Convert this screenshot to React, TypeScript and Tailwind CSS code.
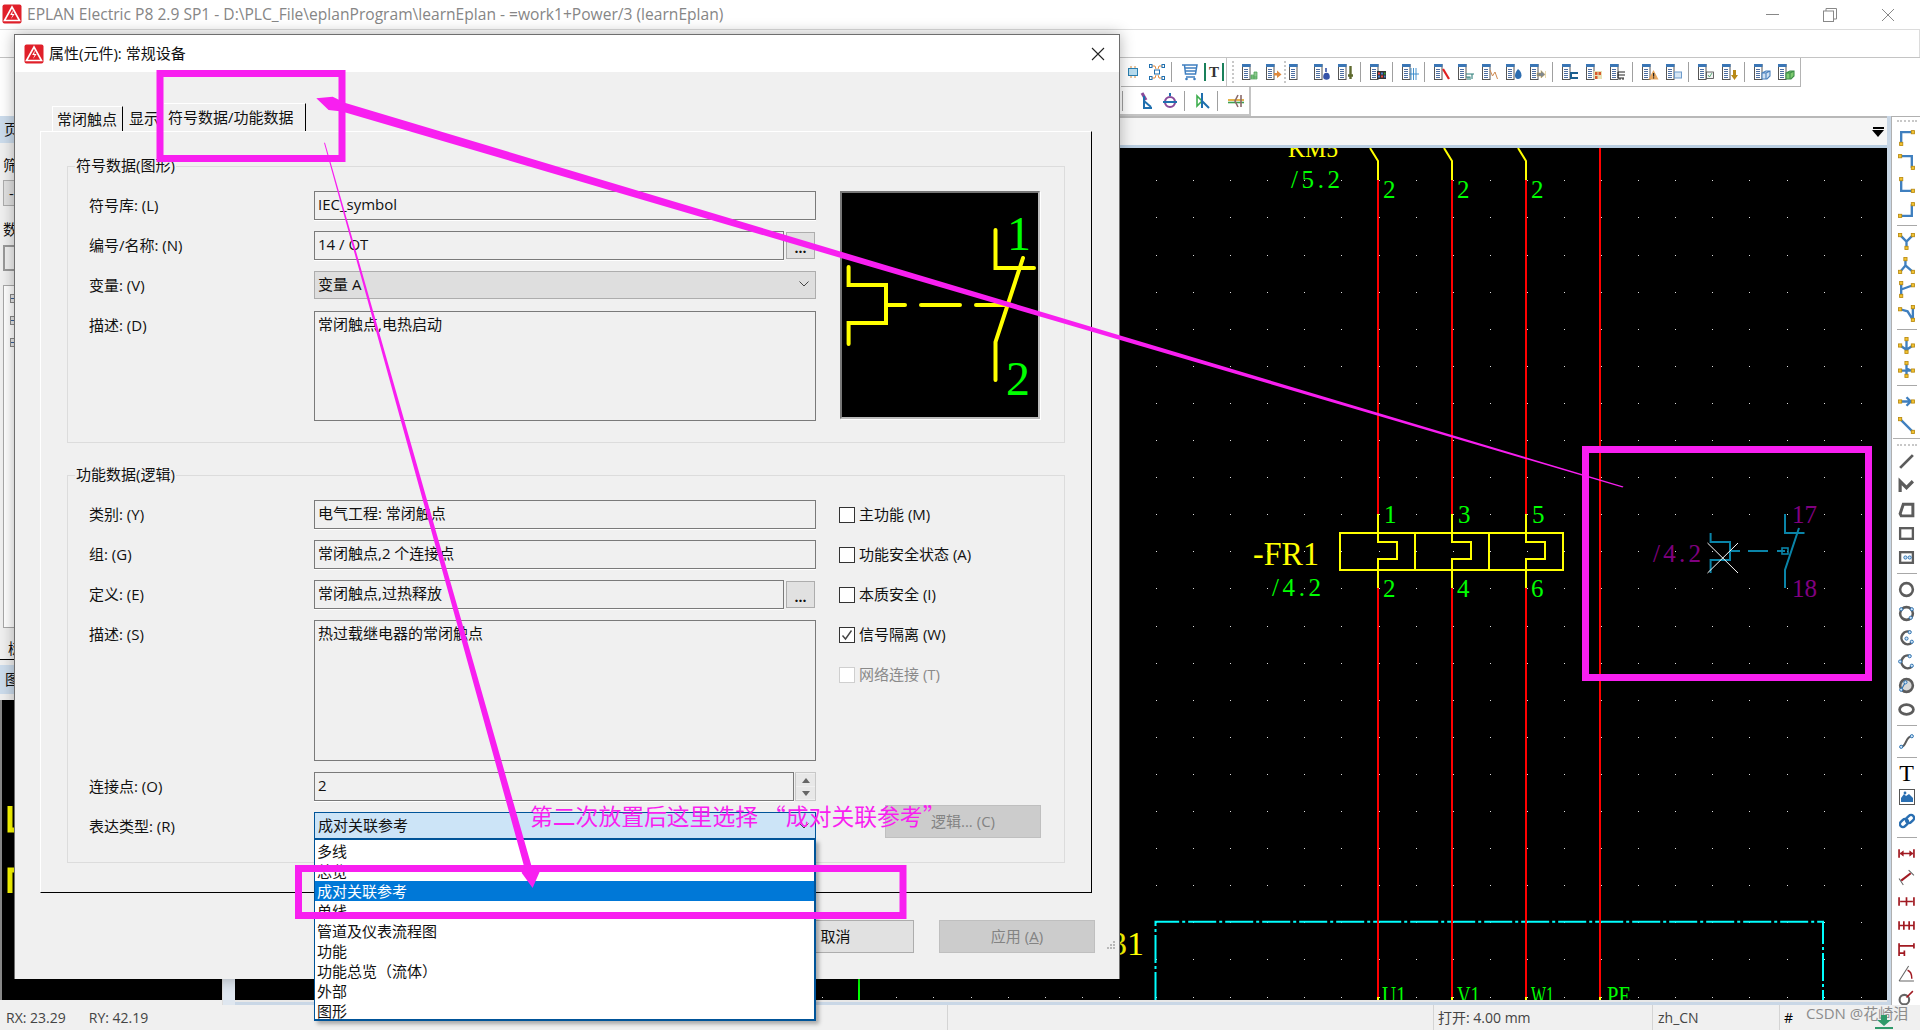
import type { ReactNode } from "react";

const serif = "Liberation Serif, serif";
const MAGENTA = "#f81ff0";

const Logo = () => (
  <svg width="20" height="20" viewBox="0 0 20 20">
    <rect x="0.5" y="0.5" width="19" height="19" rx="2" fill="#e0202a" />
    <path d="M10 3 L17.5 16.5 H2.5 Z" fill="none" stroke="#fff" strokeWidth="1.6" />
    <path d="M11 6 L8.2 11 H10.6 L9 15 L12.6 10 H10.2 Z" fill="#fff" />
  </svg>
);

/* toolbar document icons: page plus a small coloured accent */
const accents: Record<string, ReactNode> = {
  blank: null,
  green: <path d="M9 15V11H12V8H15V15Z M9 13H15 M12 11V15" fill="#8fc98f" stroke="#3f9f4f" strokeWidth="0.7" />,
  orange: <path d="M8 9H11V6.5L15.5 10.5 11 14V11.5H8Z" fill="#e08a3c" />,
  plug: <path d="M12 4V8M10 13a2.5 3.5 0 0 1 5 0a2.5 2 0 0 1-5 0Z" fill="#3553a8" stroke="#3553a8" strokeWidth="1.6" />,
  stick: <path d="M12.5 2V11M10 11.5H15M12.5 11.5V15" fill="none" stroke="#5e6a2e" strokeWidth="2.4" />,
  table: (
    <g>
      <rect x="7" y="7" width="9" height="8" fill="#333" />
      <rect x="8" y="8.5" width="2" height="2" fill="#e44" />
      <rect x="11" y="8.5" width="2" height="2" fill="#4a7fd0" />
      <rect x="14" y="8.5" width="1.5" height="2" fill="#3a3" />
      <rect x="8" y="11.5" width="2" height="2" fill="#4a7fd0" />
      <rect x="11" y="11.5" width="2" height="2" fill="#e44" />
      <rect x="14" y="11.5" width="1.5" height="2" fill="#4a7fd0" />
    </g>
  ),
  redline: <path d="M9 4V16M11.5 4V16M14 4V16M7 10H17" stroke="#2f86c8" strokeWidth="0.9" />,
  redcross: <path d="M9 5L15 15" stroke="#e02020" strokeWidth="2.2" />,
  wires: <path d="M8 10H16M8 13H12V16M14 10V15M10 13V16" fill="none" stroke="#2f7f7a" strokeWidth="1.1" />,
  wave: <path d="M8 6L10.5 12L13 8L15.5 15" fill="none" stroke="#d08a50" strokeWidth="1" />,
  blob: <path d="M12 5C14.5 7 15.5 9 15.5 11.5C15.5 14 13.5 15 12 15C10 15 9 13.5 9 11.5C9 9 10.5 7 12 5Z" fill="#2d6db0" />,
  gray: <path d="M7 9H11V6.5L15 10.5L11 14V12H7Z M15.5 7V14" fill="#808890" stroke="#c9a030" strokeWidth="0.4" />,
  term: <path d="M8 8H16V10H10V13H16V15H8Z" fill="#1c5f8f" />,
  ogrid: (
    <g>
      <rect x="7.5" y="7" width="8.5" height="8" fill="#e6e2b8" />
      <rect x="9" y="8" width="2.5" height="3" fill="#d9592a" />
      <rect x="12.5" y="8" width="2.5" height="3" fill="#d9592a" />
      <rect x="9" y="12" width="2.5" height="3" fill="#d9592a" />
    </g>
  ),
  bterm: <path d="M8 8H15M8 8V11H15M8 11V14H14M10 14V16M13 14V16" fill="none" stroke="#222" strokeWidth="1" />,
  warn: (
    <g>
      <path d="M11.5 6L16.5 15.5H6.5Z" fill="#e8a860" />
      <rect x="11" y="9" width="1.2" height="3.6" fill="#222" />
      <rect x="11" y="13.3" width="1.2" height="1.2" fill="#222" />
    </g>
  ),
  bluebox: <rect x="8.5" y="8" width="7" height="6" fill="#d6e6f4" stroke="#6f9ccc" strokeWidth="1" />,
  check: (
    <g>
      <rect x="8.5" y="8" width="7" height="6.5" fill="#f4f4f4" stroke="#444" strokeWidth="0.8" />
      <path d="M10 11L11.5 13L14 9" fill="none" stroke="#3a9a5a" strokeWidth="0.8" />
    </g>
  ),
  down: <path d="M11 6H14V11H16L12.5 16L9 11H11Z" fill="#b98a18" />,
  cube: <path d="M8 9L12 7H16V12L13 15H8ZM8 9H12V15M12 9L16 7" fill="#cfe0f2" stroke="#4a80bc" strokeWidth="1.1" />,
  gcube: <path d="M8 9L12 7H16V12L13 15H8ZM8 9H12V15M12 9L16 7" fill="#7dcb6f" stroke="#3e8f4a" strokeWidth="1.1" />,
};

const Doc = ({ accent }: { accent: string }) => (
  <svg width="17" height="16" viewBox="0 0 17 16">
    <rect x="0.5" y="0.5" width="7.5" height="15" fill="#fff" stroke="#555" />
    <rect x="0" y="0" width="8.5" height="3" fill="#3a76b6" />
    <path d="M2 5.5H6M2 7.5H6M2 9.5H6M2 11.5H6M2 13.5H6" stroke="#3a5f96" strokeWidth="0.9" />
    {accents[accent]}
  </svg>
);

const Slot = ({ children, className = "" }: { children?: ReactNode; className?: string }) => (
  <div className={`flex h-[28px] w-[24px] shrink-0 items-center justify-center ${className}`}>{children}</div>
);

const Sep = () => (
  <div className="flex h-[28px] w-[8px] shrink-0 items-center pl-[2px]">
    <div className="h-[20px] w-px bg-[#a0a0a0]" />
  </div>
);

const Grip = () => (
  <div className="mx-[3px] h-[22px] w-[2px] border-l-2 border-dotted border-[#c8c8c8]" />
);

const ChipIcon = () => (
  <svg width="16" height="16" viewBox="0 0 16 16">
    <rect x="3.5" y="4.5" width="9" height="7" fill="#b8dcee" stroke="#2a7fb0" />
    <path d="M6 2V4M10 2V4M6 12V14M10 12V14" stroke="#d88a3a" />
  </svg>
);

const NodesIcon = () => (
  <svg width="18" height="18" viewBox="0 0 18 18">
    <path d="M4 3H7L8 6M14 3H11L10 6M4 15H7L8 12M14 15H11L10 12" fill="none" stroke="#e08a3c" />
    <g fill="#fff" stroke="#1f6fae" strokeWidth="1">
      <rect x="1.5" y="1.5" width="2.5" height="3" />
      <rect x="14" y="1.5" width="2.5" height="3" />
      <rect x="1.5" y="13.5" width="2.5" height="3" />
      <rect x="14" y="13.5" width="2.5" height="3" />
      <rect x="6.5" y="7" width="5" height="4" />
    </g>
  </svg>
);

const CartIcon = () => (
  <svg width="18" height="18" viewBox="0 0 18 18">
    <path d="M1 2H16L14.5 11H4.5L3.5 2M3.5 5H15.5M4 8H15M5 14H14" fill="none" stroke="#3f7fc0" strokeWidth="1.5" />
    <circle cx="5.5" cy="16" r="1.3" fill="#3f7fc0" />
    <circle cx="13.5" cy="16" r="1.3" fill="#3f7fc0" />
  </svg>
);

const Row1 = () => {
  const group = (names: string[]) =>
    names.map((n, i) => (
      <Slot key={i}>
        <Doc accent={n} />
      </Slot>
    ));
  return (
    <div className="flex h-[30px] border-t border-[#c4c4c4] bg-white pl-[1121px]">
      <div className="flex h-[29px] items-center border-b border-r border-[#b4b4b4] pr-[2px]">
        <Slot><ChipIcon /></Slot>
        <Slot><NodesIcon /></Slot>
        <div className="w-px"><Sep /></div>
        <div className="w-[8px]" />
        <Slot><CartIcon /></Slot>
        <Slot>
          <div className="flex h-[18px] items-center border-x-2 border-[#19805a] px-[3px] text-[15px] font-bold leading-none text-[#333] [font-family:'Liberation_Serif',serif]">
            T
          </div>
        </Slot>
        <div className="h-full w-px bg-[#c4c4c4]" />
        <div className="flex w-[11px] justify-center"><Grip /></div>
        {group(["green", "orange"])}
        <Slot>
          <div className="-ml-[10px]"><Grip /></div>
          <Doc accent="blank" />
        </Slot>
        {group(["plug", "stick"])}
        <Sep />
        {group(["table"])}
        <Sep />
        {group(["redline"])}
        <Sep />
        {group(["redcross", "wires", "wave", "blob", "gray"])}
        <Sep />
        {group(["term", "ogrid", "bterm"])}
        <Sep />
        {group(["warn", "bluebox"])}
        <Sep />
        {group(["check", "down"])}
        <Sep />
        {group(["cube", "gcube"])}
      </div>
    </div>
  );
};

const Row2 = () => (
  <div className="flex h-[29px] items-center bg-white pl-[1120px]">
    <div className="flex h-[29px] items-center border-b-2 border-r-2 border-[#c4c4c4] pr-[1px]">
      <div className="w-[5px]"><Sep /></div>
      <Slot className="ml-[9px]">
        <svg width="16" height="18" viewBox="0 0 16 18">
          <path d="M4 1L8 8" stroke="#8a4a9a" strokeWidth="3" />
          <path d="M6 4V16H14" fill="none" stroke="#1f6fae" strokeWidth="2" />
          <path d="M6 9L13 15" stroke="#1f6fae" strokeWidth="2" />
        </svg>
      </Slot>
      <Slot>
        <svg width="16" height="18" viewBox="0 0 16 18">
          <circle cx="8" cy="10" r="5" fill="none" stroke="#8a4a9a" strokeWidth="2.2" />
          <path d="M8 1V4M1 10H15" stroke="#1f6fae" strokeWidth="2" />
        </svg>
      </Slot>
      <div className="w-[9px]"><Sep /></div>
      <Slot>
        <svg width="16" height="18" viewBox="0 0 16 18">
          <path d="M2 4V14L7 9Z" fill="none" stroke="#3fae4f" strokeWidth="1.6" />
          <path d="M7 1V9L14 16M7 9V16" fill="none" stroke="#1f6fae" strokeWidth="2" />
        </svg>
      </Slot>
      <div className="w-[9px]"><Sep /></div>
      <Slot>
        <svg width="16" height="14" viewBox="0 0 16 14">
          <path d="M0 6H16" stroke="#e0a020" strokeWidth="1.6" />
          <path d="M0 8.5H16" stroke="#3f9f4f" strokeWidth="1.6" />
          <path d="M10 1L7 7L10 13M13 1V13" fill="none" stroke="#8a6a6a" strokeWidth="1.6" />
        </svg>
      </Slot>
    </div>
  </div>
);

/* right hand drawing toolbar */
const Wire = ({ d, pts }: { d: string; pts: number[][] }) => (
  <svg width="17" height="17" viewBox="0 0 16 16">
    <path d={d} fill="none" stroke="#3f7fbf" strokeWidth="2.2" />
    {pts.map(([x, y], i) => (
      <rect key={i} x={x - 1.5} y={y - 1.5} width="3" height="3" fill="#f2c230" stroke="#b98a10" strokeWidth="0.8" />
    ))}
  </svg>
);

const Shape = ({ children }: { children: ReactNode }) => (
  <svg width="17" height="17" viewBox="0 0 16 16" fill="none" stroke="#5c5c5c" strokeWidth="2.2">
    {children}
  </svg>
);

const BlueDots = ({ pts }: { pts: number[][] }) => (
  <g fill="#cfe3f5" stroke="#2a70b0" strokeWidth="0.9">
    {pts.map(([x, y], i) => (
      <circle key={i} cx={x} cy={y} r="1.5" />
    ))}
  </g>
);

const Dim = ({ children }: { children: ReactNode }) => (
  <svg width="17" height="17" viewBox="0 0 16 16" fill="none" stroke="#a11a22" strokeWidth="1.6">
    {children}
  </svg>
);

const rightTools: (ReactNode | "sep" | "break")[] = [
  <Wire d="M3 14V3H13" pts={[[3, 14], [14, 3]]} />,
  <Wire d="M2 3H13V14" pts={[[2, 3], [14, 14]]} />,
  <Wire d="M3 2V13H14" pts={[[3, 2], [14, 13]]} />,
  <Wire d="M2 14H13V3" pts={[[2, 14], [14, 3]]} />,
  "sep",
  <Wire d="M2 2L8 8L14 2M8 8V14" pts={[[2, 2], [14, 2], [8, 14]]} />,
  <Wire d="M7 2V8L14 14M7 8L2 14" pts={[[7, 2], [14, 14], [2, 14]]} />,
  <Wire d="M3 2V14M3 8L14 4" pts={[[3, 2], [3, 14], [14, 4]]} />,
  <Wire d="M2 4L9 6L14 14M14 2V14" pts={[[2, 4], [14, 2], [14, 14]]} />,
  "sep",
  <Wire d="M8 2V14M2 8L8 12L14 8" pts={[[8, 2], [2, 8], [14, 8], [8, 14]]} />,
  <Wire d="M8 2V7L12 9L8 9V14M3 9L8 9" pts={[[8, 2], [2, 9], [14, 9], [8, 14]]} />,
  "sep",
  <Wire d="M2 8H14M8 4L12 8L8 12" pts={[[2, 8], [14, 8]]} />,
  <Wire d="M2 2L14 14" pts={[[2, 2], [14, 14]]} />,
  "break",
  <Shape><path d="M2 14L14 2" strokeWidth="2.6" /></Shape>,
  <Shape><path d="M2 14V4L8 10L14 4" strokeWidth="3" /></Shape>,
  <Shape><path d="M2 12L5 3H14V14H3Z" strokeWidth="2.8" /></Shape>,
  <Shape><rect x="2" y="3" width="12" height="10" /></Shape>,
  <Shape>
    <rect x="2" y="3" width="12" height="10" />
    <BlueDots pts={[[7, 8], [11, 8]]} />
  </Shape>,
  "sep",
  <Shape><circle cx="8" cy="8" r="6" strokeWidth="2.4" /></Shape>,
  <Shape>
    <circle cx="8" cy="8" r="6" strokeWidth="2.4" />
    <BlueDots pts={[[3, 4], [13, 4], [12, 12]]} />
  </Shape>,
  <Shape>
    <path d="M12 3A6 6 0 1 0 13 13" strokeWidth="2.4" />
    <BlueDots pts={[[11, 3], [8, 9], [13, 12]]} />
  </Shape>,
  <Shape>
    <path d="M12 3A6 6 0 1 0 13 13" strokeWidth="2.4" />
    <BlueDots pts={[[11, 3], [2, 8], [13, 12]]} />
  </Shape>,
  <Shape>
    <circle cx="8" cy="8" r="6" fill="#d8d8d8" strokeWidth="2.4" />
    <path d="M3 12L7 5" stroke="#2a70b0" strokeWidth="1" />
    <BlueDots pts={[[3, 12], [7, 5]]} />
  </Shape>,
  <Shape><ellipse cx="8" cy="8" rx="6.5" ry="4.5" strokeWidth="2.6" /></Shape>,
  "sep",
  <Shape>
    <path d="M3 13C8 13 7 3 13 3" strokeWidth="2" />
    <BlueDots pts={[[3, 13], [13, 3]]} />
  </Shape>,
  "sep",
  <span className="text-[24px] leading-none text-black [font-family:'Liberation_Serif',serif]">T</span>,
  <svg width="16" height="16" viewBox="0 0 16 16">
    <rect x="0.5" y="0.5" width="15" height="15" fill="#fff" stroke="#555" />
    <path d="M2 13V9L5 5L7 7L10 5L14 9V13Z" fill="#2a6fb2" />
    <circle cx="6" cy="4" r="1.4" fill="#2a6fb2" />
  </svg>,
  <svg width="16" height="16" viewBox="0 0 16 16" fill="none" stroke="#2a6fb2" strokeWidth="2.4">
    <rect x="0.5" y="7" width="9" height="6" rx="3" transform="rotate(-45 5 10)" />
    <rect x="6.5" y="3" width="9" height="6" rx="3" transform="rotate(-45 11 6)" />
  </svg>,
  "sep",
  <Dim><path d="M1 4V12M15 4V12M2 8H14" /><path d="M2 8L5 5.5V10.5ZM14 8L11 5.5V10.5Z" fill="#a11a22" strokeWidth="0.5" /></Dim>,
  <Dim><path d="M3 11L12 4" strokeWidth="2" /><path d="M1 9L5 15M10 1L15 6" stroke="#666" strokeWidth="1" /></Dim>,
  <Dim><path d="M1 4V12M8 4V12M15 4V12M2 8H14" /></Dim>,
  <Dim><path d="M1 4V12M5.5 4V12M10.5 4V12M15 4V12M1 8H15" /></Dim>,
  <Dim><path d="M1 2V14M15 2V7M6 9V14M1 4.5H15M1 11.5H6" /></Dim>,
  <svg width="17" height="17" viewBox="0 0 16 16" fill="none">
    <path d="M1 15H15M1 15L10 1" stroke="#666" />
    <path d="M9 5C12 6 13 9 13 13" stroke="#a11a22" strokeWidth="1.4" />
  </svg>,
  <svg width="17" height="17" viewBox="0 0 16 16" fill="none">
    <circle cx="6" cy="10" r="4.5" stroke="#666" strokeWidth="2" />
    <path d="M8 8L14 2" stroke="#a11a22" strokeWidth="1.4" />
  </svg>,
];

const RightToolbar = () => (
  <div className="flex h-[889px] w-[29px] shrink-0 flex-col items-center overflow-hidden border-l border-[#b0b0b0] border-t bg-white pl-[1px]">
    <div className="mt-[3px] h-[5px] w-[20px] shrink-0 border-t-2 border-dotted border-[#c8c8c8]" />
    {rightTools.map((t, i) => {
      if (t === "sep") return <div key={i} className="flex h-[8px] w-[20px] shrink-0 items-center"><div className="h-px w-full bg-[#a8a8a8]" /></div>;
      if (t === "break")
        return (
          <div key={i} className="h-[12px] w-[28px] shrink-0 pt-[1px]">
            <div className="h-[6px] border-t border-[#b0b0b0]" />
            <div className="mx-auto h-[2px] w-[20px] border-t-2 border-dotted border-[#c8c8c8]" />
          </div>
        );
      return <div key={i} className="flex h-[24px] w-[24px] shrink-0 items-center justify-center">{t}</div>;
    })}
  </div>
);

/* black schematic sheet, drawn in page coordinates */
const T = ({ x, y, c, s = 25, len, fit, children }: { x: number; y: number; c: string; s?: number; len?: number; fit?: boolean; children: string }) => (
  <text x={x} y={y} fill={c} fontSize={s} fontFamily={serif} textLength={len} lengthAdjust={len ? (fit ? "spacingAndGlyphs" : "spacing") : undefined}>
    {children}
  </text>
);

const GREEN = "#00ff00";
const YEL = "#ffff00";
const PUR = "#800080";
const TEAL = "#0a84a8";

const Sheet = () => {
  const dots = [];
  for (let i = 0; i < 46; i++) {
    for (let j = 0; j < 23; j++) {
      dots.push(<rect key={`${i}-${j}`} x={Math.round(748 + i * 37.09)} y={Math.round(180.3 + j * 37.1)} width="1" height="1" fill="#ddd" />);
    }
  }
  const cols = [1378, 1452, 1526];
  const tops = ["1", "3", "5"];
  const bots = ["2", "4", "6"];
  return (
    <svg className="absolute inset-0" width="1652" height="852" viewBox="235 148 1652 852">
      <rect x="235" y="148" width="1652" height="852" fill="#000" />
      {dots}
      <path d="M1155.5 1000V921.7H1823V1000" fill="none" stroke="#00ffff" strokeWidth="2" strokeDasharray="28 3 3 3" />
      <path d="M1600 148V1000" stroke="#ff0000" strokeWidth="2" />
      {cols.map((x, i) => (
        <g key={x}>
          <path d={`M${x} 180V514M${x} 588V1000`} stroke="#ff0000" strokeWidth="2" />
          <path d={`M${x - 8} 148L${x} 161V180M${x} 514V542H${x + 19}V559H${x}V588`} fill="none" stroke={YEL} strokeWidth="2" />
          <path d={`M${x} 997V1000`} stroke={YEL} strokeWidth="2" />
          <T x={x + 5} y={198} c={GREEN}>2</T>
          <T x={x + 6} y={523} c={GREEN}>{tops[i]}</T>
          <T x={x + 5} y={597} c={GREEN}>{bots[i]}</T>
        </g>
      ))}
      <path d="M1600 997V1000" stroke={YEL} strokeWidth="2" />
      <rect x="1340" y="533" width="223" height="37" fill="none" stroke={YEL} strokeWidth="2" />
      <path d="M1415 533V570M1489 533V570" stroke={YEL} strokeWidth="2" />
      <T x={1288} y={157} c={YEL} len={50} fit>KM5</T>
      <T x={1291} y={188} c={GREEN} len={49}>/5.2</T>
      <T x={1253} y={565} c={YEL} s={34} len={66} fit>-FR1</T>
      <T x={1272} y={596} c={GREEN} len={49}>/4.2</T>
      <T x={1653} y={562} c={PUR} len={48}>/4.2</T>
      <T x={1792} y={523} c={PUR} len={25}>17</T>
      <T x={1792} y={597} c={PUR} len={25}>18</T>
      <path d="M1785 514V533H1804.5M1799 528L1785 570V588" fill="none" stroke={TEAL} strokeWidth="2" />
      <path d="M1710.6 533V542H1730V560H1710.6V573M1730 551H1740M1748 551H1768M1777 551H1785" fill="none" stroke={TEAL} strokeWidth="2" />
      <rect x="1782" y="548" width="6" height="6" fill="none" stroke={TEAL} strokeWidth="1.6" />
      <path d="M1707.5 543L1738 573M1738 543L1707.5 573" stroke="#fff" strokeWidth="1" />
      <T x={1382} y={1004} c={GREEN} len={24} fit>U1</T>
      <T x={1457} y={1004} c={GREEN} len={23} fit>V1</T>
      <T x={1531} y={1004} c={GREEN} len={23} fit>W1</T>
      <T x={1607} y={1004} c={GREEN} len={24} fit>PE</T>
      <T x={1110} y={955} c={YEL} s={34} len={34}>31</T>
      <path d="M859 979V1000" stroke={GREEN} strokeWidth="2" />
    </svg>
  );
};

/* left dock, mostly hidden behind the dialog */
const LeftDock = () => (
  <div className="flex h-[889px] w-[222px] shrink-0 flex-col bg-[#f0f0f0] text-[15px] text-[#111]">
    <div className="flex h-[27px] items-center bg-[#ccdcec] pl-[4px]">页</div>
    <div className="h-[494px] pl-[3px] pr-[3px]">
      <div className="pt-[12px] leading-[20px]">筛选器:</div>
      <div className="mt-[5px] flex h-[26px] w-[120px] items-center border border-[#adadad] bg-[#e1e1e1] pl-[5px]">-</div>
      <div className="mt-[13px] leading-[20px]">数据:</div>
      <div className="mt-[6px] h-[26px] border-2 border-[#9a9a9a] bg-[#f0f0f0]" />
      <div className="mt-[14px] flex h-[343px] flex-col border border-[#a8a8a8] bg-white pl-[6px] pt-[8px]">
        {[0, 1, 2].map((i) => (
          <div key={i} className="mb-[13px] flex h-[9px] w-[6px] items-center border border-[#888] bg-[#e8e8e8]">
            <div className="h-px w-full bg-[#3a5f96]" />
          </div>
        ))}
      </div>
    </div>
    <div className="flex h-[23px] items-center border-b border-black pl-[8px]">树</div>
    <div className="mt-[5px] flex h-[29px] items-center bg-[#ccdcec] pl-[5px]">图形预览</div>
    <div className="relative mt-[6px] h-[300px] border-l-2 border-[#888] bg-black">
      <svg className="absolute inset-0" width="220" height="300" viewBox="2 700 220 300">
        <path d="M10 806V830H16M10 893V870H16" fill="none" stroke={YEL} strokeWidth="5" />
      </svg>
    </div>
  </div>
);

/* dialog form parts */
const inputCls = "flex h-[29px] items-center border border-[#7a7a7a] pb-[2px] pl-[3px] shadow-[0_1px_0_#fff]";

const Label = ({ children }: { children: string }) => (
  <div className="flex h-[29px] items-center pl-[21px]">{children}</div>
);

const Dots = () => (
  <div className="ml-[2px] flex h-[27px] w-[29px] shrink-0 items-end justify-center border border-[#adadad] bg-[#e1e1e1] pb-[5px] text-[14px] font-bold leading-[10px]">
    ...
  </div>
);

const Check = ({ label, on, off }: { label: string; on?: boolean; off?: boolean }) => (
  <div className={`flex h-[29px] items-center gap-[4px] ${off ? "text-[#8a8a8a]" : ""}`}>
    <div className={`flex h-[16px] w-[16px] items-center justify-center border bg-white ${off ? "border-[#cfcfcf] bg-[#f0f0f0]" : "border-[#333]"}`}>
      {on && (
        <svg width="12" height="12" viewBox="0 0 12 12">
          <path d="M1.5 6.5L4.5 10L10.5 1.5" fill="none" stroke="#444" strokeWidth="1.4" />
        </svg>
      )}
    </div>
    {label}
  </div>
);

const Group = ({ title, h, children }: { title: string; h: string; children: ReactNode }) => (
  <div className={`relative w-[998px] border border-[#dcdcdc] ${h}`}>
    <div className="absolute left-[7px] top-[-12px] bg-[#f0f0f0] px-[1px] leading-[20px]">{title}</div>
    {children}
  </div>
);

const items = ["多线", "总览", "成对关联参考", "单线", "管道及仪表流程图", "功能", "功能总览（流体）", "外部", "图形"];

const Preview = () => (
  <div className="ml-[24px] h-[228px] w-[200px] shrink-0 border-2 border-[#777] border-b-[#bbb] border-r-[#bbb] bg-black shadow-[1px_1px_0_#fff]">
    <svg width="196" height="224" viewBox="842 193 196 224">
      <path d="M995.5 230V268H1034M1023 258L995.5 342V380" fill="none" stroke={YEL} strokeWidth="4" strokeLinecap="round" />
      <path d="M848.6 267V285H886V323H848.6V344M886 305H905M921 305H960M976 305H1007" fill="none" stroke={YEL} strokeWidth="4" strokeLinecap="round" />
      <text x="1007" y="250" fill={GREEN} fontSize="48" fontFamily={serif}>1</text>
      <text x="1006" y="395" fill={GREEN} fontSize="48" fontFamily={serif}>2</text>
    </svg>
  </div>
);

const Dialog = () => (
  <div className="absolute left-[14px] top-[34px] h-[945px] w-[1106px] border-l border-r border-t border-[#6e6e6e] bg-[#f0f0f0] text-[15px] text-[#111] shadow-[0_0_14px_rgba(0,0,0,0.3)]">
    <div className="flex h-[37px] items-center justify-between bg-white pl-[9px] pr-[14px]">
      <div className="flex items-center gap-[5px]">
        <Logo />
        <span>属性(元件): 常规设备</span>
      </div>
      <svg width="14" height="14" viewBox="0 0 14 14">
        <path d="M1 1L13 13M13 1L1 13" stroke="#222" strokeWidth="1.1" />
      </svg>
    </div>
    <div className="relative pt-[31px]">
      <div className="flex h-[28px] items-end pl-[37px]">
        <div className="flex h-[25px] w-[71px] items-center border-l border-t border-white border-r-black pl-[4px] [border-right-width:1px]">常闭触点</div>
        <div className="flex h-[25px] w-[41px] items-center pl-[6px]">显示</div>
        <div className="flex h-[28px] w-[142px] items-center border-r border-t border-r-black border-t-white pl-[4px]">符号数据/功能数据</div>
      </div>
      <div className="ml-[25px] h-[762px] w-[1052px] border border-b-black border-l-white border-r-black border-t-white pl-[26px] pt-[34px]">
        <Group title="符号数据(图形)" h="h-[277px]">
          <div className="flex pt-[24px]">
            <div className="grid w-[748px] grid-cols-[246px_502px] gap-y-[11px]">
              <Label>符号库: (L)</Label>
              <div className={inputCls}>IEC_symbol</div>
              <Label>编号/名称: (N)</Label>
              <div className="flex items-center">
                <div className={`${inputCls} w-[470px]`}>14 / OT</div>
                <Dots />
              </div>
              <Label>变量: (V)</Label>
              <div className="flex h-[28px] items-center justify-between border border-[#adadad] bg-[#dedede] pb-[2px] pl-[3px] pr-[6px]">
                变量 A
                <svg width="10" height="6" viewBox="0 0 10 6">
                  <path d="M0.5 0.5L5 5L9.5 0.5" fill="none" stroke="#444" />
                </svg>
              </div>
              <Label>描述: (D)</Label>
              <div className="h-[110px] border border-[#7a7a7a] pl-[3px] pt-[2px] leading-[20px]">常闭触点,电热启动</div>
            </div>
            <Preview />
          </div>
        </Group>
        <div className="h-[32px]" />
        <Group title="功能数据(逻辑)" h="h-[388px]">
          <div className="flex pt-[24px]">
            <div className="grid w-[748px] grid-cols-[246px_502px] gap-y-[11px]">
              <Label>类别: (Y)</Label>
              <div className={inputCls}>电气工程: 常闭触点</div>
              <Label>组: (G)</Label>
              <div className={inputCls}>常闭触点,2 个连接点</div>
              <Label>定义: (E)</Label>
              <div className="flex items-center">
                <div className={`${inputCls} w-[470px]`}>常闭触点,过热释放</div>
                <Dots />
              </div>
              <Label>描述: (S)</Label>
              <div className="h-[141px] border border-[#7a7a7a] pl-[3px] pt-[2px] leading-[20px]">热过载继电器的常闭触点</div>
              <Label>连接点: (O)</Label>
              <div className="flex gap-[1px]">
                <div className={`${inputCls} w-[480px]`}>2</div>
                <div className="flex h-[29px] w-[21px] flex-col items-center justify-between border border-[#c8c8c8] py-[1px]">
                  <div className="flex h-[12px] w-[19px] items-center justify-center bg-[#e8e8e8]">
                    <div className="h-0 w-0 border-x-[4px] border-b-[5px] border-x-transparent border-b-[#666]" />
                  </div>
                  <div className="flex h-[12px] w-[19px] items-center justify-center bg-[#e8e8e8]">
                    <div className="h-0 w-0 border-x-[4px] border-t-[5px] border-x-transparent border-t-[#666]" />
                  </div>
                </div>
              </div>
              <Label>表达类型: (R)</Label>
              <div className="relative flex h-[28px] items-center justify-between border border-[#005499] border-b-2 bg-[#cce4f7] pl-[3px] pr-[6px]">
                成对关联参考
                <svg width="10" height="6" viewBox="0 0 10 6">
                  <path d="M0.5 0.5L5 5L9.5 0.5" fill="none" stroke="#444" />
                </svg>
                <div className="absolute left-[-1px] top-[26px] z-10 flex h-[182px] w-[502px] flex-col border border-[#005499] border-b-2 border-r-2 bg-white pl-[2px] pt-[1px] shadow-[3px_3px_4px_rgba(0,0,0,0.3)]">
                  {items.map((it, i) => (
                    <div key={it} className={`-ml-[2px] flex h-[20px] shrink-0 items-center pl-[2px] ${i === 2 ? "bg-[#0078d7] text-white" : ""}`}>
                      {it}
                    </div>
                  ))}
                </div>
              </div>
            </div>
            <div className="ml-[23px] flex flex-col gap-[11px]">
              <Check label="主功能 (M)" />
              <Check label="功能安全状态 (A)" />
              <Check label="本质安全 (I)" />
              <Check label="信号隔离 (W)" on />
              <Check label="网络连接 (T)" off />
              <div className="ml-[46px] mt-[105px] flex h-[33px] w-[156px] items-center justify-center border border-[#bfbfbf] bg-[#cccccc] text-[#838383]">逻辑... (C)</div>
            </div>
          </div>
        </Group>
      </div>
      <div className="mt-[27px] flex gap-[25px] pl-[560px]">
        <div className="flex h-[33px] w-[157px] items-center justify-center border border-[#adadad] bg-[#e1e1e1]">确定</div>
        <div className="flex h-[33px] w-[157px] items-center justify-center border border-[#adadad] bg-[#e1e1e1]">取消</div>
        <div className="flex h-[33px] w-[156px] items-center justify-center border border-[#bfbfbf] bg-[#cccccc] text-[#838383]">
          <span>应用 (<span className="underline">A</span>)</span>
        </div>
      </div>
      <svg className="absolute bottom-[2px] right-[2px]" width="12" height="12" viewBox="0 0 12 12">
        <path d="M8 2h2v2H8zM5 5h2v2H5zM8 5h2v2H8zM2 8h2v2H2zM5 8h2v2H5zM8 8h2v2H8z" fill="#b8b8b8" />
      </svg>
    </div>
  </div>
);

/* hand drawn magenta notes on top of the screenshot */
const Notes = () => (
  <svg className="pointer-events-none absolute inset-0 z-20" width="1920" height="1030" viewBox="0 0 1920 1030">
    <rect x="160" y="73.5" width="182" height="85" fill="none" stroke={MAGENTA} strokeWidth="7" />
    <rect x="298.5" y="868.5" width="604.5" height="47" fill="none" stroke={MAGENTA} strokeWidth="7" />
    <rect x="1585.5" y="449.5" width="283" height="228" fill="none" stroke={MAGENTA} strokeWidth="7" />
    <polygon points="1623.5,486.5 345.5,103 332.7,96.7 316.3,98.3 328.6,110 342,111.5 1622.5,487.5" fill={MAGENTA} />
    <polygon points="324,142.7 325,142.7 531.5,866 540,871 532.6,888 521.6,872.7 524.5,868" fill={MAGENTA} />
    <text x="530" y="825" fill={MAGENTA} fontSize="22.8" fontFamily="Noto Sans CJK SC, sans-serif">第二次放置后这里选择 “成对关联参考”</text>
  </svg>
);

export default function App() {
  return (
    <div className="relative h-[1030px] w-[1920px] overflow-hidden bg-white [font-family:'Open_Sans','Noto_Sans_CJK_SC',sans-serif]">
      <div className="flex h-[29px] items-center justify-between bg-white pl-[2px]">
        <div className="flex items-center gap-[5px]">
          <Logo />
          <span className="text-[15.6px] text-[#868686]">EPLAN Electric P8 2.9 SP1 - D:\PLC_File\eplanProgram\learnEplan - =work1+Power/3 (learnEplan)</span>
        </div>
        <div className="flex items-center gap-[44px] pr-[25px]">
          <div className="h-px w-[13px] bg-[#888]" />
          <svg width="14" height="14" viewBox="0 0 14 14" fill="none" stroke="#888">
            <rect x="0.5" y="3" width="10" height="10.5" />
            <path d="M3 3V0.5H13.5V11H10.5" />
          </svg>
          <svg width="14" height="14" viewBox="0 0 14 14">
            <path d="M1 1L13 13M13 1L1 13" stroke="#888" />
          </svg>
        </div>
      </div>
      <div className="h-[28px] border-r border-t border-[#dcdcdc] bg-white" />
      <Row1 />
      <Row2 />
      <div className="flex h-[889px]">
        <LeftDock />
        <div className="h-[889px] w-[13px] shrink-0 border-l border-[#ddd] bg-[#dfe7f0]" />
        <div className="flex w-[1652px] shrink-0 flex-col">
          <div className="flex h-[29px] items-center justify-end border-t-2 border-[#b8b8b8] bg-[#f5f5f5] pr-[3px]">
            <div className="flex flex-col items-center">
              <div className="h-[2px] w-[11px] bg-black" />
              <div className="mt-px h-0 w-0 border-x-[6px] border-t-[7px] border-x-transparent border-t-black" />
            </div>
          </div>
          <div className="h-[3px] bg-[#b9cde0]" />
          <div className="relative h-[852px] bg-black">
            <Sheet />
          </div>
          <div className="h-[5px] border-t-[2px] border-[#e8e8e8] bg-[#c9d7e6]" />
        </div>
        <div className="w-[4px] shrink-0 bg-[#c9d7e6]" />
        <RightToolbar />
      </div>
      <div className="relative flex h-[25px] items-center bg-[#f0f0f0] text-[14px] text-[#444]">
        <div className="w-[947px] pl-[6px]">
          RX: 23.29
          <span className="ml-[23px]">RY: 42.19</span>
        </div>
        <div className="h-[25px] w-[486px] border-l border-[#d4d4d4]" />
        <div className="flex h-[25px] w-[219px] items-center border-l border-[#d4d4d4] pl-[4px]">打开: 4.00 mm</div>
        <div className="flex h-[25px] w-[127px] items-center border-l border-[#d4d4d4] pl-[5px]">zh_CN</div>
        <div className="flex h-[25px] items-center border-l border-[#d4d4d4] pl-[4px] text-black">#</div>
        <div className="absolute left-[1806px] top-[-3px] text-[15px] text-[#8c8c8c]">CSDN @花崎泪</div>
        <svg className="absolute left-[1874px] top-[10px]" width="20" height="15" viewBox="0 0 20 15">
          <path d="M7 0H13V5H17L10 11L3 5H7Z" fill="#2f9a6a" />
          <path d="M1 13H19" stroke="#2f9a6a" strokeWidth="2" />
        </svg>
      </div>
      <Dialog />
      <Notes />
    </div>
  );
}
